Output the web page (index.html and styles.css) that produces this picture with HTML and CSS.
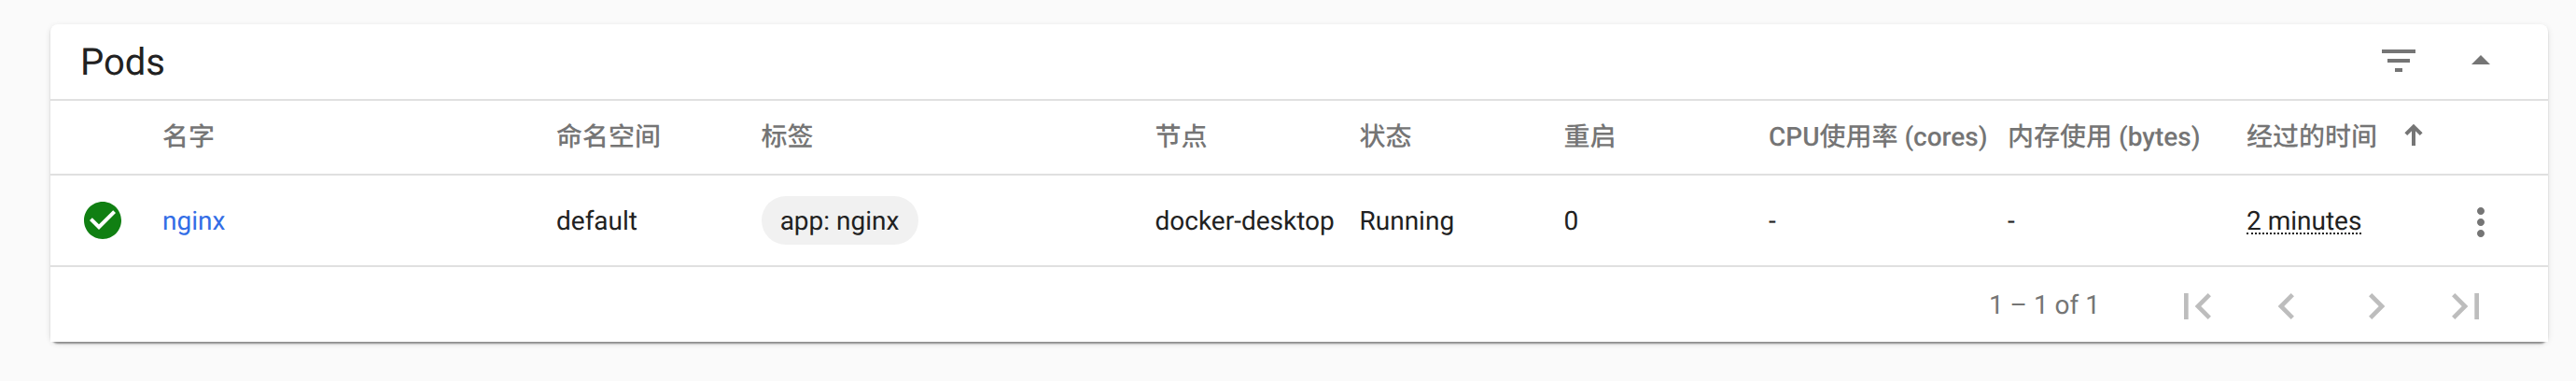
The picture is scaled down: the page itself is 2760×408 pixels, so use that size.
FILE: index.html
```html
<!DOCTYPE html>
<html lang="zh">
<head>
<meta charset="utf-8">
<title>Pods</title>
<link rel="stylesheet" href="styles.css">
</head>
<body>
<main class="card">
  <header class="card-header">
    <h1 class="title">Pods</h1>
    <svg class="icon filter" viewBox="0 0 24 24"><path d="M10 18h4v-2h-4v2zM3 6v2h18V6H3zm3 7h12v-2H6v2z"/></svg>
    <svg class="icon" viewBox="0 0 24 24"><path d="M7 14l5-5 5 5z"/></svg>
  </header>
  <div class="row head">
    <span></span>
    <span>名字</span>
    <span>命名空间</span>
    <span>标签</span>
    <span>节点</span>
    <span>状态</span>
    <span>重启</span>
    <span>CPU使用率 (cores)</span>
    <span>内存使用 (bytes)</span>
    <span class="sorted">经过的时间<svg class="sort" viewBox="0 0 20 24"><path d="M10 23V3M1.8 10.6L10 2.6l8.200 8"/></svg></span>
    <span></span>
  </div>
  <div class="row body">
    <svg class="icon ok" viewBox="0 0 24 24"><path d="M12 2C6.48 2 2 6.48 2 12s4.48 10 10 10 10-4.48 10-10S17.52 2 12 2zm-2 15l-5-5 1.41-1.41L10 14.17l7.59-7.59L19 8l-9 9z"/></svg>
    <a class="link">nginx</a>
    <span>default</span>
    <span class="labels"><span class="chip">app: nginx</span></span>
    <span>docker-desktop</span>
    <span>Running</span>
    <span>0</span>
    <span>-</span>
    <span>-</span>
    <span><span class="age">2 minutes</span></span>
    <svg class="icon more" viewBox="0 0 24 24"><path d="M12 8c1.1 0 2-.9 2-2s-.9-2-2-2-2 .9-2 2 .9 2 2 2zm0 2c-1.1 0-2 .9-2 2s.9 2 2 2 2-.9 2-2-.9-2-2-2zm0 6c-1.1 0-2 .9-2 2s.9 2 2 2 2-.9 2-2-.9-2-2-2z"/></svg>
  </div>
  <footer class="paginator">
    <span class="range">1 – 1 of 1</span>
    <svg class="nav" viewBox="0 0 24 24"><path d="M18.41 16.59L13.82 12l4.59-4.59L17 6l-6 6 6 6zM6 6h2v12H6z"/></svg>
    <svg class="nav" viewBox="0 0 24 24"><path d="M15.41 7.41L14 6l-6 6 6 6 1.41-1.41L10.83 12z"/></svg>
    <svg class="nav" viewBox="0 0 24 24"><path d="M10 6L8.59 7.41 13.17 12l-4.58 4.59L10 18l6-6z"/></svg>
    <svg class="nav" viewBox="0 0 24 24"><path d="M5.59 7.41L10.18 12l-4.59 4.59L7 18l6-6-6-6zM16 6h2v12h-2z"/></svg>
  </footer>
</main>
</body>
</html>
```
FILE: styles.css
```css
* { box-sizing: border-box; }

body {
  margin: 0;
  padding: 26px 30px 42px 54px;
  background: #fafafa;
  color: #212121;
  font: 28px/40px Roboto, "Noto Sans CJK SC", sans-serif;
  text-rendering: geometricPrecision;
  overflow: hidden;
}

.card {
  background: #fff;
  border-radius: 8px;
  box-shadow: 0 4px 2px -2px rgba(0, 0, 0, .3), 0 2px 2px rgba(0, 0, 0, .14), 0 2px 6px rgba(0, 0, 0, .12);
}

.card-header {
  display: flex;
  align-items: center;
  height: 82px;
  padding: 0 48px 2px 32px;
  border-bottom: 2px solid #e0e0e0;
}

.title {
  flex: 1;
  margin: 0;
  padding-top: 3px;
  font-size: 40px;
  font-weight: 400;
  line-height: 48px;
}

.icon {
  display: block;
  width: 48px;
  height: 48px;
  fill: #757575;
}

.filter { margin-right: 40px; }

.row {
  display: grid;
  grid-template-columns: 88px 422px 219.5px 422px 219px 219px 219.5px 256px 256px 227px 48px;
  align-items: center;
  padding-left: 32px;
  border-bottom: 2px solid #e0e0e0;
  white-space: nowrap;
}

.head {
  height: 80px;
  color: #757575;
  font-weight: 500;
}

.body { height: 98px; }

.body > span,
.link { padding-top: 2px; }

.body > .labels { padding-top: 0; }

.sorted {
  display: flex;
  align-items: center;
}

.sort {
  width: 20px;
  height: 24px;
  margin: 0 0 4px 29px;
  fill: none;
  stroke: #757575;
  stroke-width: 4;
}

.ok { fill: #107f12; }

.link { color: #326de6; }

.chip {
  display: block;
  width: 168px;
  height: 52px;
  border-radius: 26px;
  background: #f1f1f1;
  line-height: 54px;
  text-align: center;
}

.age {
  display: inline-block;
  height: 31px;
  line-height: 34px;
  border-bottom: 2px dotted #212121;
}

.more { margin-top: 4px; }

.paginator {
  display: flex;
  align-items: center;
  height: 80px;
  padding: 4px 60px 0 0;
  background: #fff;
}

.range {
  flex: 1;
  margin: 0 76px 2px 0;
  color: #757575;
  text-align: right;
}

.nav {
  width: 56px;
  height: 56px;
  margin-left: 40px;
  fill: #bdbdbd;
}

.range + .nav { margin-left: 0; }
```
